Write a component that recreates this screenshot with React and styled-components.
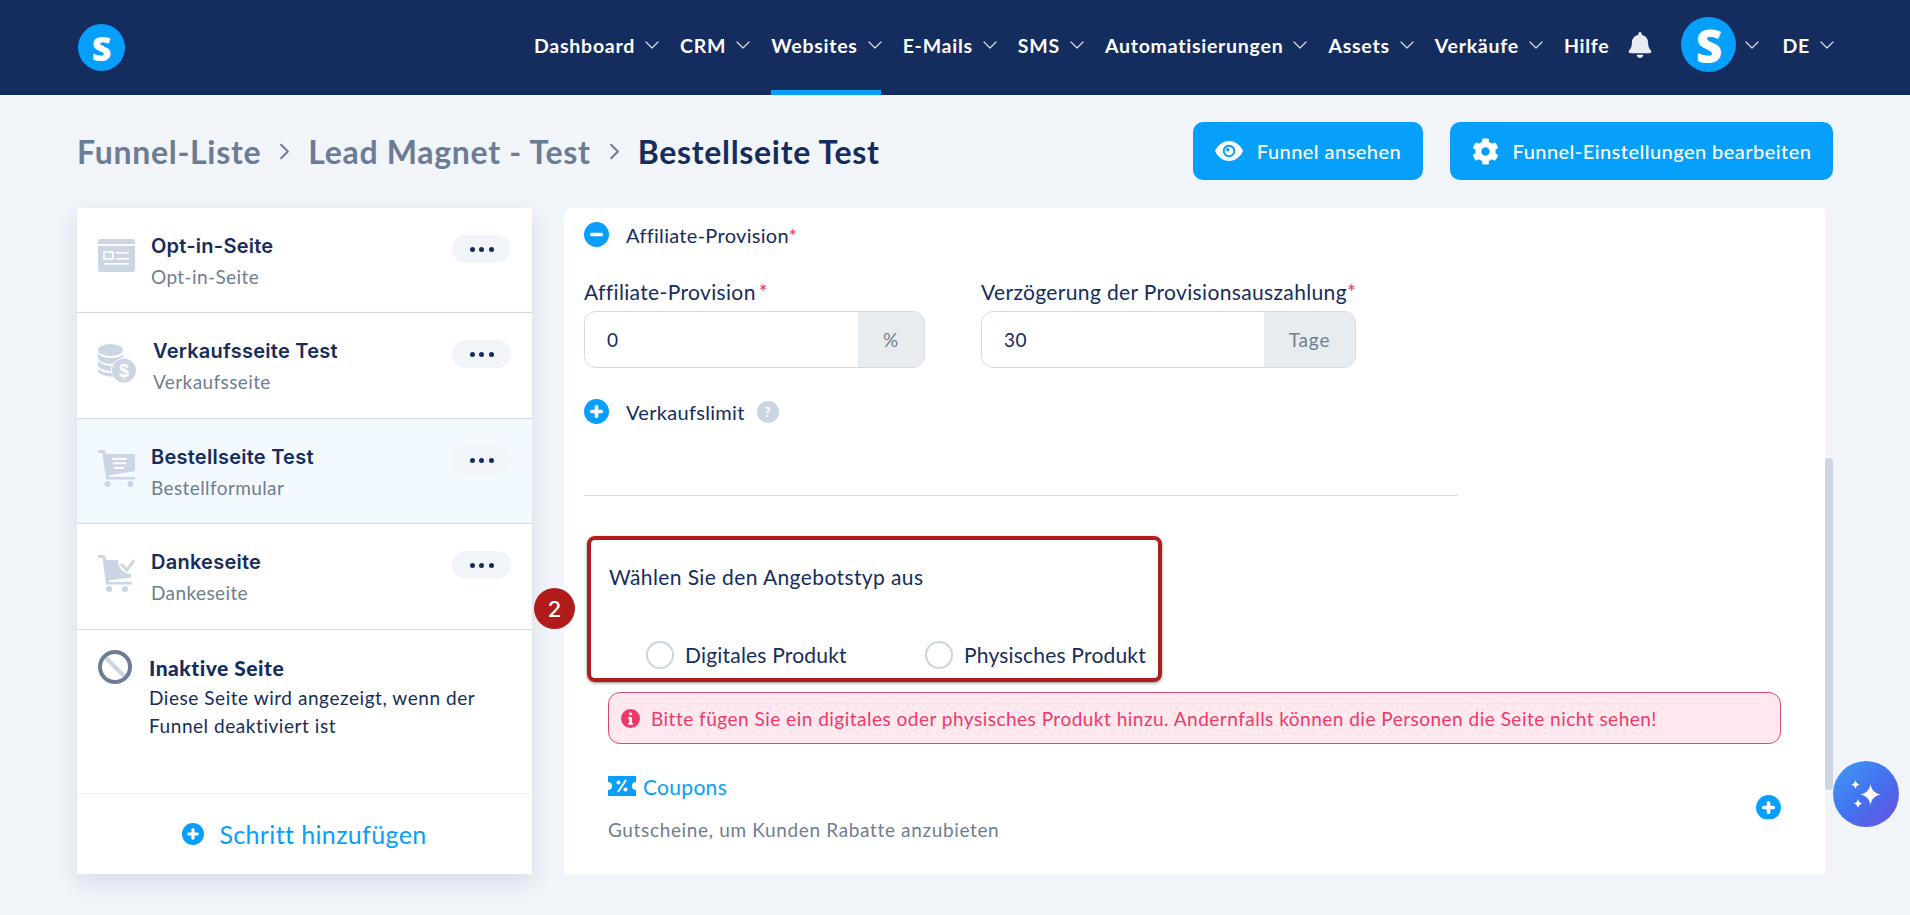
import React from 'react';
import styled, { createGlobalStyle } from 'styled-components';
import { ChevronDown, ChevronRight } from 'lucide-react';
import { FaBell, FaCog } from 'react-icons/fa';

const GlobalStyle = createGlobalStyle`
  html, body {
    margin: 0;
    padding: 0;
    background: #f1f4f9;
    font-family: "Lato", "Liberation Sans", sans-serif;
    color: #152c5e;
    overflow: hidden;
  }
  * { box-sizing: border-box; }
`;

const Page = styled.div`
  width: 1910px;
  height: 915px;
  position: relative;
  overflow: hidden;
`;

const Header = styled.header`
  height: 95px;
  background: #152c5f;
  padding: 0 77px 0 78px;
  display: flex;
  align-items: center;
  justify-content: space-between;
`;

const Logo = styled.div`
  width: ${(p) => p.$size}px;
  height: ${(p) => p.$size}px;
  border-radius: 50%;
  background: #069ffc;
  color: #fff;
  font-family: "Open Sans", sans-serif;
  font-weight: 800;
  font-size: ${(p) => p.$font}px;
  line-height: 1;
  display: flex;
  align-items: center;
  justify-content: center;
`;

const Nav = styled.nav`
  display: flex;
  align-items: center;
  height: 95px;
  padding-bottom: 6px;
`;

const NavItem = styled.div`
  height: 95px;
  align-self: flex-start;
  display: flex;
  align-items: center;
  gap: 5px;
  margin-left: ${(p) => p.$gap}px;
  color: #fff;
  font-size: 19.5px;
  font-weight: 700;
  letter-spacing: 0.75px;
  white-space: nowrap;
  border-bottom: ${(p) => (p.$active ? '5px solid #069ffc' : '5px solid transparent')};

  svg { color: #d8deea; margin-right: -6px; }
`;

const BellWrap = styled.div`
  margin-left: 18px;
  display: flex;
  align-items: center;
  color: #e9ebf1;
`;

const AvatarWrap = styled.div`
  margin-left: 28px;
  display: flex;
  align-items: center;
  gap: 4px;
  svg { color: #d8deea; margin-right: -6px; }
`;

const Toolbar = styled.div`
  height: 113px;
  padding: 27px 77px 0;
  display: flex;
  align-items: flex-start;
  justify-content: space-between;
`;

const Breadcrumb = styled.div`
  height: 58px;
  display: flex;
  align-items: center;
  font-size: 32px;
  font-weight: 700;
  letter-spacing: 0.7px;
  color: #6c7c94;

  svg { margin: 0 10px; color: #6c7c94; }
`;

const Current = styled.span`
  color: #152c5e;
`;

const Actions = styled.div`
  display: flex;
  gap: 27px;
`;

const ActionButton = styled.button`
  height: 58px;
  width: ${(p) => p.$width}px;
  border: none;
  border-radius: 10px;
  background: #069ffc;
  color: #fff;
  font-family: inherit;
  font-size: 20px;
  font-weight: 500;
  letter-spacing: 0.45px;
  display: flex;
  align-items: center;
  justify-content: center;
  gap: 14px;
`;

const Columns = styled.div`
  padding: 0 77px;
  display: flex;
  gap: 32px;
  height: 666px;
`;

const Sidebar = styled.aside`
  width: 455px;
  flex: none;
  background: #fff;
  display: flex;
  flex-direction: column;
  box-shadow: 0 8px 20px rgba(30, 50, 90, 0.12);
`;

const StepRow = styled.div`
  height: ${(p) => p.$height}px;
  flex: none;
  padding: 25px 21px 0;
  display: flex;
  align-items: flex-start;
  background: ${(p) => (p.$selected ? '#f2f9ff' : '#fff')};
  border-bottom: 1px solid #d5dae2;
`;

const StepIcon = styled.div`
  width: 38px;
  margin-top: 6px;
  flex: none;
  display: flex;
`;

const StepText = styled.div`
  flex: 1;
  margin-left: ${(p) => p.$offset || 15}px;
`;

const StepTitle = styled.div`
  font-family: "Inter", sans-serif;
  font-size: 20px;
  font-weight: 600;
  line-height: 26px;
  letter-spacing: 0.25px;
  color: #152c5e;
`;

const StepSub = styled.div`
  margin-top: 5px;
  font-size: 19px;
  line-height: 26px;
  letter-spacing: 0.4px;
  color: #6f7d92;
`;

const DotsButton = styled.div`
  width: 59px;
  height: 28px;
  margin-top: 2px;
  border-radius: 14px;
  background: #f1f4f9;
  display: flex;
  align-items: center;
  justify-content: center;
  gap: 4.5px;
`;

const Dot = styled.span`
  width: 5px;
  height: 5px;
  border-radius: 50%;
  background: #152c5e;
`;

const InactiveRow = styled.div`
  flex: 1;
  padding: 20px 21px 0;
  display: flex;
  align-items: flex-start;
`;

const InactiveText = styled.div`
  margin-left: 17px;
  padding-top: 5px;
`;

const InactiveTitle = styled.div`
  font-size: 21px;
  font-weight: 900;
  line-height: 26px;
  letter-spacing: 0.5px;
`;

const InactiveDesc = styled.div`
  margin-top: 3px;
  font-size: 19px;
  line-height: 28px;
  letter-spacing: 0.55px;
  width: 360px;
`;

const AddStep = styled.div`
  height: 81px;
  flex: none;
  border-top: 1px solid #eef0f4;
  display: flex;
  align-items: center;
  justify-content: center;
  gap: 15px;
  color: #069ffc;
  font-size: 25px;
  letter-spacing: 0.37px;
`;

const Panel = styled.main`
  flex: 1;
  display: flex;
  background: #fff;
  border-radius: 8px 8px 0 0;
`;

const PanelBody = styled.div`
  flex: 1;
  padding: 14px 44px 0 20px;
`;

const Scrollbar = styled.div`
  width: 8px;
  flex: none;
  background: #f2f3f6;
  border-radius: 4px;
  padding-top: 250px;
`;

const ScrollThumb = styled.div`
  height: 332px;
  background: #cbd5e1;
  border-radius: 4px;
`;

const ToggleRow = styled.div`
  display: flex;
  align-items: center;
  height: 25px;
  font-size: 20px;
  letter-spacing: 0.3px;
  margin-top: ${(p) => p.$top || 0}px;
  gap: 17px;
`;

const Required = styled.span`
  color: #f0386b;
  margin-left: ${(p) => p.$offset || 0}px;
`;

const FieldRow = styled.div`
  display: flex;
  gap: 56px;
  margin-top: 32px;
`;

const Field = styled.div`
  width: ${(p) => p.$width}px;
`;

const FieldLabel = styled.div`
  font-size: 21px;
  line-height: 26px;
  letter-spacing: 0.35px;
  white-space: nowrap;
  margin-bottom: 6px;
`;

const InputGroup = styled.div`
  height: 57px;
  display: flex;
  border: 1px solid #d5dae2;
  border-radius: 12px;
  overflow: hidden;
`;

const InputValue = styled.div`
  flex: 1;
  padding-left: 22px;
  display: flex;
  align-items: center;
  font-size: 19px;
  letter-spacing: 0.5px;
`;

const Addon = styled.div`
  width: ${(p) => p.$width}px;
  background: #e9ecef;
  color: #6f7d92;
  display: flex;
  align-items: center;
  justify-content: center;
  font-size: 19px;
  letter-spacing: 0.8px;
`;

const HelpBadge = styled.span`
  width: 22px;
  height: 22px;
  margin-left: -5px;
  border-radius: 50%;
  background: #cbd5e1;
  color: #fff;
  font-size: 13px;
  font-weight: 700;
  display: flex;
  align-items: center;
  justify-content: center;
`;

const Divider = styled.div`
  width: 874px;
  height: 1px;
  margin-top: 71px;
  background: #d9dee6;
`;

const Callout = styled.div`
  position: relative;
  width: 575px;
  height: 146px;
  margin: 40px 0 0 3px;
  padding: 24px 0 0 18px;
  border: 4px solid #b01c1c;
  border-radius: 8px;
  box-shadow: 0 1px 3px rgba(60, 60, 60, 0.6);
`;

const CalloutBadge = styled.div`
  position: absolute;
  left: -57px;
  top: 48px;
  width: 41px;
  height: 41px;
  border-radius: 50%;
  background: #b01c1c;
  color: #fff;
  font-family: "Inter", sans-serif;
  font-size: 22px;
  font-weight: 500;
  display: flex;
  align-items: center;
  justify-content: center;
`;

const CalloutTitle = styled.div`
  font-size: 21px;
  line-height: 26px;
  letter-spacing: 0.4px;
`;

const RadioRow = styled.div`
  display: flex;
  margin: 51px 0 0 37px;
`;

const RadioOption = styled.label`
  width: ${(p) => p.$width}px;
  display: flex;
  align-items: center;
  gap: 11px;
  font-size: 21px;
  line-height: 28px;
  letter-spacing: 0.2px;
  white-space: nowrap;
`;

const RadioCircle = styled.span`
  width: 28px;
  height: 28px;
  flex: none;
  border-radius: 50%;
  background: #fff;
  border: 2px solid #cbd5e1;
`;

const Alert = styled.div`
  height: 52px;
  margin: 10px 0 0 24px;
  padding-left: 12px;
  display: flex;
  align-items: center;
  gap: 11px;
  background: #ffe9ee;
  border: 1px solid #d9486e;
  border-radius: 12px;
  color: #f0386b;
  font-size: 19px;
  letter-spacing: 0.49px;
  white-space: nowrap;
`;

const CouponBlock = styled.div`
  position: relative;
  margin: 29px 0 0 24px;
`;

const CouponTitle = styled.div`
  display: flex;
  align-items: center;
  gap: 7px;
  height: 26px;
  color: #069ffc;
  font-size: 21px;
  letter-spacing: 0.3px;
`;

const CouponDesc = styled.div`
  margin-top: 18px;
  font-size: 19px;
  line-height: 26px;
  letter-spacing: 0.65px;
  color: #6f7d92;
`;

const CouponAdd = styled.div`
  position: absolute;
  right: 0;
  top: 22px;
  height: 24px;
  overflow: hidden;
`;

const AssistantButton = styled.div`
  position: absolute;
  left: 1833px;
  top: 761px;
  width: 66px;
  height: 66px;
  border-radius: 50%;
  background: linear-gradient(135deg, #3f9bf5 0%, #4372f0 50%, #6a4fe0 100%);
  display: flex;
  align-items: center;
  justify-content: center;
`;

const CircleSign = ({ size = 25, minus }) => (
  <svg width={size} height={size} viewBox="0 0 25 25">
    <circle cx="12.5" cy="12.5" r="12.5" fill="#069ffc" />
    <rect x="6" y="10.7" width="13" height="3.6" rx="1.6" fill="#fff" />
    {!minus && <rect x="10.7" y="6" width="3.6" height="13" rx="1.6" fill="#fff" />}
  </svg>
);

const PageIcon = () => (
  <svg width="37" height="33" viewBox="0 0 37 33">
    <path d="M3 0h31a3 3 0 0 1 3 3v2H0V3a3 3 0 0 1 3-3zM0 7h37v23a3 3 0 0 1-3 3H3a3 3 0 0 1-3-3z" fill="#cbd5e4" />
    <rect x="6" y="13" width="9" height="7" fill="none" stroke="#fff" strokeWidth="1.6" />
    <rect x="18" y="13" width="13" height="1.6" fill="#fff" />
    <rect x="18" y="19" width="13" height="1.6" fill="#fff" />
    <rect x="6" y="24" width="25" height="1.6" fill="#fff" />
  </svg>
);

const CoinsIcon = () => (
  <svg width="38" height="39" viewBox="0 0 38 39">
    <ellipse cx="12.5" cy="6" rx="12.5" ry="6" fill="#cbd5e4" />
    <path d="M0 9c2 3 7 5 12.500 5S23 13 25 10v3c-5 2-8 4-10 7-8 0-15-3-15-6zM0 17c3 3 8 4.500 13.500 5-.5 1.500-.7 3-.5 5-6 0-13-2.500-13-6zM0 25c3 2.500 8 4 13.500 4 .5 1.500 1 2.500 2 3.500C8 33 0 30 0 27z" fill="#cbd5e4" />
    <circle cx="26" cy="26.500" r="12" fill="#cbd5e4" />
    <text x="26" y="33" textAnchor="middle" fontSize="18" fontWeight="700" fill="#fff" fontFamily="Liberation Sans">$</text>
  </svg>
);

const CartListIcon = () => (
  <svg width="37" height="37" viewBox="0 0 37 37">
    <path d="M0 0h6.500l2 4H37v17L11 25.500V27h26v2.500H8L4.500 3H0z" fill="#cbd5e4" />
    <rect x="14" y="8" width="15" height="1.800" fill="#fff" />
    <rect x="15" y="12.500" width="13" height="1.800" fill="#fff" />
    <rect x="16" y="17" width="10" height="1.800" fill="#fff" />
    <circle cx="9.500" cy="34" r="3" fill="#cbd5e4" />
    <circle cx="32.500" cy="34" r="3" fill="#cbd5e4" />
  </svg>
);

const CartCheckIcon = () => (
  <svg width="37" height="37" viewBox="0 0 37 37">
    <path d="M0 0h6.500l2 5H20c0 8 5 13 13 14v3.500L11 25.500V27h23v2.500H8L4.500 3H0z" fill="#cbd5e4" />
    <path d="M23 9l6 6 7-10" fill="none" stroke="#cbd5e4" strokeWidth="3" />
    <circle cx="11" cy="34" r="3" fill="#cbd5e4" />
    <circle cx="27" cy="34" r="3" fill="#cbd5e4" />
  </svg>
);

const BanIcon = () => (
  <svg width="34" height="34" viewBox="0 0 34 34">
    <path d="M8 8l18 18" stroke="#cbd5e4" strokeWidth="4" />
    <circle cx="17" cy="17" r="15" fill="none" stroke="#6c7c94" strokeWidth="4" />
  </svg>
);

const EyeIcon = () => (
  <svg width="28" height="20" viewBox="0 0 28 20">
    <path d="M14 0c6.500 0 11.500 4.500 14 10-2.500 5.500-7.500 10-14 10S2.500 15.500 0 10C2.500 4.500 7.500 0 14 0z" fill="#fff" />
    <circle cx="14" cy="10" r="6.200" fill="#069ffc" />
    <circle cx="14" cy="10" r="4.300" fill="#fff" />
    <circle cx="12.800" cy="8.800" r="1.700" fill="#069ffc" />
  </svg>
);

const InfoIcon = () => (
  <svg width="19" height="19" viewBox="0 0 19 19">
    <circle cx="9.500" cy="9.500" r="9.500" fill="#f0386b" />
    <rect x="8.200" y="3.500" width="2.800" height="2.800" rx="1.200" fill="#fff" />
    <path d="M7 8h4v6h1v1.800H7V14h1.200V9.800H7z" fill="#fff" />
  </svg>
);

const CouponIcon = () => (
  <svg width="28" height="20" viewBox="0 0 28 20">
    <path d="M0 0h28v6a4 4 0 0 0 0 8v6H0v-6a4 4 0 0 0 0-8z" fill="#069ffc" />
    <path d="M18 4L10 16" stroke="#fff" strokeWidth="2" />
    <circle cx="10.500" cy="6.500" r="2" fill="#fff" />
    <circle cx="17.500" cy="13.500" r="2" fill="#fff" />
  </svg>
);

const SparklesIcon = () => (
  <svg width="30" height="28" viewBox="0 0 30 28">
    <path d="M19.500 4c1 6 4.500 9.500 10 10.500-5.500 1-9 4.500-10 10.500-1-6-4.500-9.500-10-10.500 5.500-1 9-4.500 10-10.500z" fill="#fff" />
    <path d="M4.500 0c.5 2.800 2 4 4.500 4.500C6.500 5 5 6.500 4.500 9 4 6.500 2.500 5 0 4.500 2.500 4 4 2.800 4.500 0zM7 19c.5 2.800 2 4 4.500 4.500C9 24 7.500 25.500 7 28c-.5-2.500-2-4-4.500-4.500C5 23 6.500 21.800 7 19z" fill="#fff" />
  </svg>
);

const navItems = [
  { label: 'Dashboard', gap: 0 },
  { label: 'CRM', gap: 22 },
  { label: 'Websites', gap: 22, active: true },
  { label: 'E-Mails', gap: 22 },
  { label: 'SMS', gap: 22 },
  { label: 'Automatisierungen', gap: 22 },
  { label: 'Assets', gap: 22 },
  { label: 'Verkäufe', gap: 22 },
];

const steps = [
  { title: 'Opt-in-Seite', sub: 'Opt-in-Seite', icon: <PageIcon />, height: 105 },
  { title: 'Verkaufsseite Test', sub: 'Verkaufsseite', icon: <CoinsIcon />, offset: 17, height: 106 },
  { title: 'Bestellseite Test', sub: 'Bestellformular', icon: <CartListIcon />, selected: true, height: 105 },
  { title: 'Dankeseite', sub: 'Dankeseite', icon: <CartCheckIcon />, height: 106 },
];

function Dots() {
  return (
    <DotsButton>
      <Dot />
      <Dot />
      <Dot />
    </DotsButton>
  );
}

export default function App() {
  return (
    <Page>
      <GlobalStyle />
      <Header>
        <Logo $size={47} $font={34}>S</Logo>
        <Nav>
          {navItems.map((item) => (
            <NavItem key={item.label} $gap={item.gap} $active={item.active}>
              {item.label}
              <ChevronDown size={24} strokeWidth={1.2} />
            </NavItem>
          ))}
          <NavItem $gap={22}>Hilfe</NavItem>
          <BellWrap><FaBell size={26} /></BellWrap>
          <AvatarWrap>
            <Logo $size={55} $font={46}>S</Logo>
            <ChevronDown size={24} strokeWidth={1.2} />
          </AvatarWrap>
          <NavItem $gap={24}>
            DE
            <ChevronDown size={24} strokeWidth={1.2} />
          </NavItem>
        </Nav>
      </Header>

      <Toolbar>
        <Breadcrumb>
          Funnel-Liste
          <ChevronRight size={27} strokeWidth={1.8} />
          Lead Magnet - Test
          <ChevronRight size={27} strokeWidth={1.8} />
          <Current>Bestellseite Test</Current>
        </Breadcrumb>
        <Actions>
          <ActionButton $width={230}>
            <EyeIcon />
            Funnel ansehen
          </ActionButton>
          <ActionButton $width={383}>
            <FaCog size={27} />
            Funnel-Einstellungen bearbeiten
          </ActionButton>
        </Actions>
      </Toolbar>

      <Columns>
        <Sidebar>
          {steps.map((step) => (
            <StepRow key={step.title} $selected={step.selected} $height={step.height}>
              <StepIcon>{step.icon}</StepIcon>
              <StepText $offset={step.offset}>
                <StepTitle>{step.title}</StepTitle>
                <StepSub>{step.sub}</StepSub>
              </StepText>
              <Dots />
            </StepRow>
          ))}
          <InactiveRow>
            <BanIcon />
            <InactiveText>
              <InactiveTitle>Inaktive Seite</InactiveTitle>
              <InactiveDesc>Diese Seite wird angezeigt, wenn der Funnel deaktiviert ist</InactiveDesc>
            </InactiveText>
          </InactiveRow>
          <AddStep>
            <CircleSign size={22} />
            Schritt hinzufügen
          </AddStep>
        </Sidebar>

        <Panel>
          <PanelBody>
            <ToggleRow>
              <CircleSign minus />
              <span>Affiliate-Provision<Required>*</Required></span>
            </ToggleRow>
            <FieldRow>
              <Field $width={341}>
                <FieldLabel>Affiliate-Provision<Required $offset={3}>*</Required></FieldLabel>
                <InputGroup>
                  <InputValue>0</InputValue>
                  <Addon $width={66}>%</Addon>
                </InputGroup>
              </Field>
              <Field $width={375}>
                <FieldLabel>Verzögerung der Provisionsauszahlung<Required>*</Required></FieldLabel>
                <InputGroup>
                  <InputValue>30</InputValue>
                  <Addon $width={91}>Tage</Addon>
                </InputGroup>
              </Field>
            </FieldRow>
            <ToggleRow $top={31}>
              <CircleSign />
              <span>Verkaufslimit</span>
              <HelpBadge>?</HelpBadge>
            </ToggleRow>
            <Divider />
            <Callout>
              <CalloutBadge>2</CalloutBadge>
              <CalloutTitle>Wählen Sie den Angebotstyp aus</CalloutTitle>
              <RadioRow>
                <RadioOption $width={279}><RadioCircle />Digitales Produkt</RadioOption>
                <RadioOption $width={230}><RadioCircle />Physisches Produkt</RadioOption>
              </RadioRow>
            </Callout>
            <Alert>
              <InfoIcon />
              Bitte fügen Sie ein digitales oder physisches Produkt hinzu. Andernfalls können die Personen die Seite nicht sehen!
            </Alert>
            <CouponBlock>
              <CouponTitle><CouponIcon />Coupons</CouponTitle>
              <CouponDesc>Gutscheine, um Kunden Rabatte anzubieten</CouponDesc>
              <CouponAdd><CircleSign /></CouponAdd>
            </CouponBlock>
          </PanelBody>
          <Scrollbar><ScrollThumb /></Scrollbar>
        </Panel>
      </Columns>

      <AssistantButton><SparklesIcon /></AssistantButton>
    </Page>
  );
}
